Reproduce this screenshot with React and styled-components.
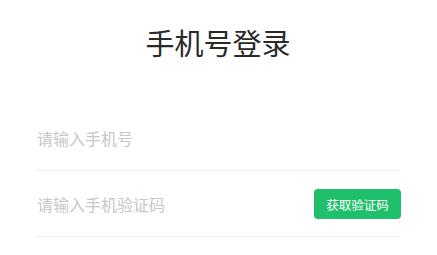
import React from "react";
import styled, { createGlobalStyle } from "styled-components";

const GlobalStyle = createGlobalStyle`
    html, body {
        margin: 0;
        padding: 0;
        background: #ffffff;
    }
    body {
        font-family: "Noto Sans CJK SC", "Noto Sans", sans-serif;
    }
`;

const Page = styled.div`
    width: 437px;
    height: 255px;
    box-sizing: border-box;
    padding: 0 36px 0 35px;
    display: flex;
    flex-direction: column;
`;

const Title = styled.h1`
    margin: 0;
    height: 84px;
    padding-top: 20px;
    box-sizing: border-box;
    text-align: center;
    font-size: 29px;
    font-weight: 400;
    line-height: 44px;
    color: #2a2a2a;
`;

const Form = styled.div`
    margin-top: 21px;
    display: flex;
    flex-direction: column;
`;

const Row = styled.div`
    height: 66px;
    box-sizing: border-box;
    border-bottom: 1px solid #f1f1f1;
    display: flex;
    align-items: center;
    justify-content: space-between;
    padding-left: 2px;
`;

const Input = styled.input`
    flex: 1;
    border: none;
    outline: none;
    background: transparent;
    font-family: "Noto Sans CJK SC", sans-serif;
    font-size: 16px;
    color: #333333;
    padding: 0;

    &::placeholder {
        color: #c6c7cb;
    }
`;

const CodeButton = styled.button`
    width: 87px;
    height: 30px;
    border: none;
    border-radius: 4px;
    background: #1fbf6b;
    color: #ffffff;
    font-family: "Noto Sans CJK SC", sans-serif;
    font-size: 12.5px;
    padding: 0;
    cursor: pointer;
    margin-top: 1px;
`;

const App = () => {
    return (
        <>
            <GlobalStyle />
            <Page>
                <Title>手机号登录</Title>
                <Form>
                    <Row>
                        <Input placeholder="请输入手机号" />
                    </Row>
                    <Row>
                        <Input placeholder="请输入手机验证码" />
                        <CodeButton>获取验证码</CodeButton>
                    </Row>
                </Form>
            </Page>
        </>
    );
};

export default App;
